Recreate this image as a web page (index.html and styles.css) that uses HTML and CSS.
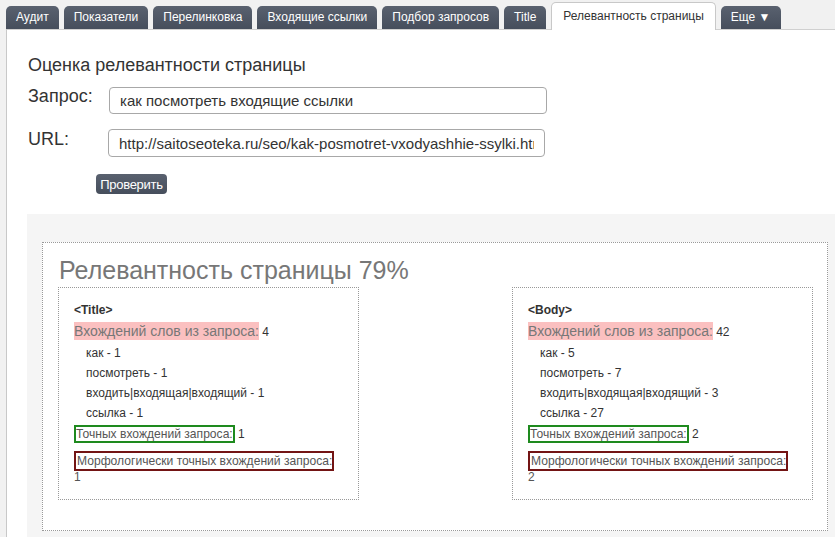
FILE: index.html
```html
<!DOCTYPE html>
<html lang="ru">
<head>
<meta charset="utf-8">
<title>Релевантность страницы</title>
<link rel="stylesheet" href="styles.css">
</head>
<body>
<nav class="tabs">
  <span class="tab">Аудит</span>
  <span class="tab">Показатели</span>
  <span class="tab">Перелинковка</span>
  <span class="tab">Входящие ссылки</span>
  <span class="tab">Подбор запросов</span>
  <span class="tab">Title</span>
  <span class="tab tab-active">Релевантность страницы</span>
  <span class="tab">Еще ▼</span>
</nav>
<main class="panel">
  <h1 class="form-title">Оценка релевантности страницы</h1>
  <div class="form-row row-query">
    <label class="form-label">Запрос:</label>
    <input class="form-input input-query" type="text" value="как посмотреть входящие ссылки">
  </div>
  <div class="form-row row-url">
    <label class="form-label">URL:</label>
    <input class="form-input input-url" type="text" value="http://saitoseoteka.ru/seo/kak-posmotret-vxodyashhie-ssylki.html">
  </div>
  <button class="check-btn">Проверить</button>

  <section class="result-area">
    <div class="result-box">
      <h2 class="result-title">Релевантность страницы 79%</h2>
      <div class="cols">
        <div class="col-box">
          <div class="col-head">&lt;Title&gt;</div>
          <div class="count-line"><span class="hl-pink">Вхождений слов из запроса:</span> 4</div>
          <ul class="word-list">
            <li>как - 1</li>
            <li>посмотреть - 1</li>
            <li>входить|входящая|входящий - 1</li>
            <li>ссылка - 1</li>
          </ul>
          <div class="exact-line"><span class="box-green">Точных вхождений запроса:</span> 1</div>
          <div class="morph-line"><span class="box-red">Морфологически точных вхождений запроса:</span><br>1</div>
        </div>
        <div class="col-box">
          <div class="col-head">&lt;Body&gt;</div>
          <div class="count-line"><span class="hl-pink">Вхождений слов из запроса:</span> 42</div>
          <ul class="word-list">
            <li>как - 5</li>
            <li>посмотреть - 7</li>
            <li>входить|входящая|входящий - 3</li>
            <li>ссылка - 27</li>
          </ul>
          <div class="exact-line"><span class="box-green">Точных вхождений запроса:</span> 2</div>
          <div class="morph-line"><span class="box-red">Морфологически точных вхождений запроса:</span><br>2</div>
        </div>
      </div>
    </div>
  </section>
</main>
</body>
</html>
```
FILE: styles.css
```css
* { box-sizing: border-box; }
html, body {
  margin: 0;
  padding: 0;
  height: 100%;
  overflow: hidden;
}
body {
  background: #f1f1f1;
  font-family: "Liberation Sans", Arial, sans-serif;
  color: #333;
  display: flex;
  flex-direction: column;
}

/* tabs */
.tabs {
  display: flex;
  align-items: flex-end;
  gap: 5px;
  height: 29px;
  padding-left: 6px;
  flex-shrink: 0;
}
.tab {
  height: 23px;
  line-height: 23px;
  padding: 0 10px;
  font-size: 12px;
  color: #fff;
  background: linear-gradient(#59616f, #464e5c);
  border-radius: 5px 5px 0 0;
  white-space: nowrap;
}
.tab-active {
  height: 28px;
  line-height: 26px;
  margin-bottom: -1px;
  background: #fff;
  color: #333;
  border: 1px solid #c8c8c8;
  border-bottom: none;
  padding: 0 11px;
  position: relative;
  z-index: 1;
}

/* panel */
.panel {
  flex: 1;
  margin-left: 6px;
  background: #fff;
  border-left: 1px solid #c8c8c8;
  border-top: 1px solid #d0d0d0;
  padding: 24px 0 0 21px;
  display: flex;
  flex-direction: column;
}
.form-title {
  margin: 0;
  font-size: 18px;
  font-weight: normal;
  line-height: 22px;
  color: #333;
}
.form-row {
  display: flex;
  align-items: flex-start;
}
.row-query { margin-top: 11px; }
.row-url { margin-top: 15px; }
.form-label {
  font-size: 18px;
  line-height: 18px;
  color: #333;
}
.row-query .form-label { width: 81px; padding-top: 0; }
.row-url .form-label { width: 80px; padding-top: 1px; }
.form-input {
  font-family: "Liberation Sans", Arial, sans-serif;
  font-size: 15px;
  color: #333;
  border: 1px solid #a8a8a8;
  border-radius: 4px;
  padding: 0 10px;
  background: #fff;
  outline: none;
}
.input-query { width: 438px; height: 27px; }
.input-url { width: 437px; height: 28px; }
.check-btn {
  align-self: flex-start;
  margin: 17px 0 0 68px;
  width: 71px;
  height: 20px;
  padding: 0;
  border: none;
  border-radius: 4px;
  background: linear-gradient(#59616f, #464e5c);
  color: #fff;
  font-family: "Liberation Sans", Arial, sans-serif;
  font-size: 13px;
  letter-spacing: -0.3px;
}

/* results */
.result-area {
  flex: 1;
  margin: 20px 0 0 -1px;
  background: #f5f5f5;
  padding: 28px 0 0 15px;
}
.result-box {
  width: 786px;
  background: #fff;
  border: 1px dotted #999;
  padding: 13px 14px 30px 15px;
}
.result-title {
  margin: 0 0 3px;
  font-size: 25px;
  font-weight: normal;
  line-height: 28px;
  color: #777;
  padding-left: 1px;
}
.cols {
  display: flex;
  justify-content: space-between;
}
.col-box {
  width: 301px;
  border: 1px dotted #999;
  padding: 12px 10px 14px 15px;
  font-size: 12px;
  color: #333;
}
.col-head {
  line-height: 20px;
  font-weight: bold;
  color: #333;
}
.count-line {
  line-height: 22px;
  font-size: 12px;
}
.hl-pink {
  background: #fbc0c0;
  color: #777;
  font-size: 14px;
  padding: 1px 0;
}
.word-list {
  list-style: none;
  margin: 0;
  padding: 0 0 0 12px;
}
.word-list li {
  line-height: 20px;
}
.exact-line {
  line-height: 22px;
  font-size: 12px;
}
.box-green {
  border: 2px solid #1e8a1e;
  color: #555;
  font-size: 12.1px;
  padding: 0;
}
.morph-line {
  margin-top: 8px;
  line-height: 16px;
  font-size: 12px;
  color: #555;
}
.box-red {
  border: 2px solid #731414;
  color: #555;
  font-size: 12.1px;
  padding: 1px 0 1px 1px;
  white-space: nowrap;
}
```
